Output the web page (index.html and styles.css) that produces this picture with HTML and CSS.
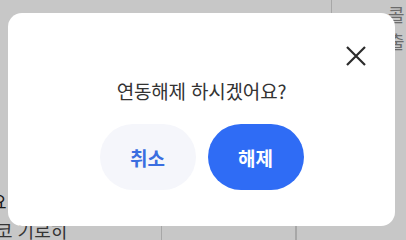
FILE: index.html
```html
<!DOCTYPE html>
<html lang="ko">
<head>
<meta charset="utf-8">
<link rel="stylesheet" href="styles.css">
</head>
<body>
<div class="page">
  <div class="top-row">
    <div class="top-main"></div>
    <div class="top-side"><span class="side-text">콜출</span></div>
  </div>
  <div class="mid-row">
    <span class="edge-text">요</span>
  </div>
  <div class="bottom-row">
    <div class="cell c1"><span class="bt">코 기로히</span></div>
    <div class="cell c2"><span class="bt2">보이기</span></div>
    <div class="cell c3"></div>
  </div>
</div>
<div class="overlay"></div>
<div class="dialog">
  <button class="close" aria-label="닫기">
    <svg width="22" height="22" viewBox="0 0 22 22"><path d="M2 2 L20 20 M20 2 L2 20" stroke="#2b2b2b" stroke-width="2.2" stroke-linecap="butt" fill="none"/></svg>
  </button>
  <p class="title">연동해제 하시겠어요?</p>
  <div class="actions">
    <button class="btn cancel">취소</button>
    <button class="btn confirm">해제</button>
  </div>
</div>
</body>
</html>
```
FILE: styles.css
```css
html, body {
  margin: 0;
  padding: 0;
}
body {
  width: 406px;
  height: 240px;
  overflow: hidden;
  background: #ffffff;
  font-family: "Noto Sans CJK KR", "Noto Sans", sans-serif;
  position: relative;
}
.page {
  width: 406px;
  height: 240px;
  display: flex;
  flex-direction: column;
}
.top-row {
  height: 60px;
  display: flex;
}
.top-main {
  width: 333px;
  border-right: 1px solid #d6d6d6;
}
.top-side {
  flex: 1;
  padding-left: 56px;
  padding-top: 1px;
}
.side-text {
  display: block;
  width: 18px;
  font-size: 18px;
  line-height: 27px;
  color: #8a8a8a;
  word-break: break-all;
}
.mid-row {
  height: 160px;
  display: flex;
  align-items: flex-end;
}
.edge-text {
  font-size: 18px;
  line-height: 22px;
  color: #222;
  margin-left: -10px;
  margin-bottom: -2px;
}
.bottom-row {
  flex: 1;
  display: flex;
}
.cell {
  border-right: 1px solid #d6d6d6;
}
.c1 { width: 161px; }
.c2 { width: 133px; display: flex; justify-content: center; }
.c3 { width: 0; }
.bt {
  display: block;
  font-size: 18px;
  line-height: 20px;
  color: #444;
  margin-top: 10px;
  margin-left: -4px;
  white-space: nowrap;
}
.bt2 {
  display: block;
  font-size: 20px;
  line-height: 20px;
  color: #222;
  margin-top: -12px;
  letter-spacing: 2px;
}
.overlay {
  position: absolute;
  inset: 0;
  background: rgba(0, 0, 0, 0.22);
}
.dialog {
  position: absolute;
  left: 8px;
  top: 13px;
  width: 387px;
  height: 213px;
  background: #ffffff;
  border-radius: 14px;
  display: flex;
  flex-direction: column;
  align-items: center;
  box-sizing: border-box;
  padding-top: 65px;
}
.close {
  position: absolute;
  right: 28px;
  top: 32px;
  width: 22px;
  height: 22px;
  padding: 0;
  border: 0;
  background: none;
  display: flex;
}
.title {
  margin: 0;
  font-size: 19px;
  line-height: 26px;
  color: #333333;
  font-weight: 400;
  letter-spacing: -0.2px;
}
.actions {
  display: flex;
  gap: 12px;
  margin-top: 20px;
}
.btn {
  width: 96px;
  height: 66px;
  border: 0;
  border-radius: 33px;
  font-family: "Noto Sans CJK KR", "Noto Sans", sans-serif;
  font-size: 19px;
  font-weight: 700;
  padding: 0;
}
.cancel {
  background: #f5f6fb;
  color: #3a6ee0;
}
.confirm {
  background: #2f6cf5;
  color: #ffffff;
}
```
